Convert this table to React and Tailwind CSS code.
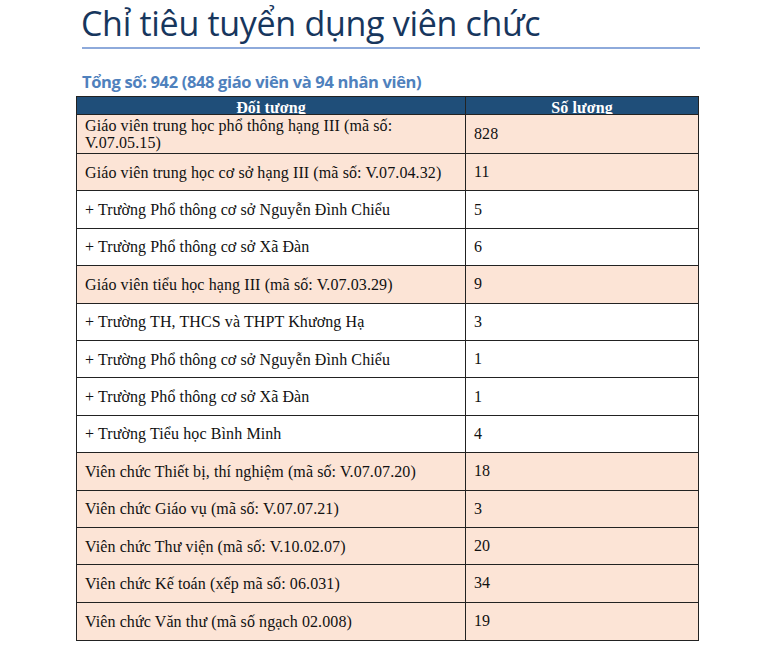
export default function App() {
  const rows = [
    ["Giáo viên trung học phổ thông hạng III (mã số: V.07.05.15)", "828", true, 39],
    ["Giáo viên trung học cơ sở hạng III (mã số: V.07.04.32)", "11", true],
    ["+ Trường Phổ thông cơ sở Nguyễn Đình Chiểu", "5", false],
    ["+ Trường Phổ thông cơ sở Xã Đàn", "6", false],
    ["Giáo viên tiểu học hạng III (mã số: V.07.03.29)", "9", true],
    ["+ Trường TH, THCS và THPT Khương Hạ", "3", false],
    ["+ Trường Phổ thông cơ sở Nguyễn Đình Chiểu", "1", false],
    ["+ Trường Phổ thông cơ sở Xã Đàn", "1", false],
    ["+ Trường Tiểu học Bình Minh", "4", false],
    ["Viên chức Thiết bị, thí nghiệm (mã số: V.07.07.20)", "18", true],
    ["Viên chức Giáo vụ (mã số: V.07.07.21)", "3", true],
    ["Viên chức Thư viện (mã số: V.10.02.07)", "20", true],
    ["Viên chức Kế toán (xếp mã số: 06.031)", "34", true],
    ["Viên chức Văn thư (mã số ngạch 02.008)", "19", true],
  ];
  return (
    <div className="w-[770px] h-[649px] bg-white overflow-hidden">
      <div className="pl-[81px] pt-[0px]">
        <h1 className="text-[#17365d] text-[34px] leading-[46px] tracking-[-0.3px]" style={{ fontFamily: '"Open Sans", sans-serif' }}>
          Chỉ tiêu tuyển dụng viên chức
        </h1>
      </div>
      <div className="ml-[82px] w-[618px] h-[2px] bg-[#8eaadb] mt-[1px]" />
      <div className="pl-[82px] mt-[21px] text-[#4f81bd] font-bold text-[16.5px] tracking-[-0.35px] leading-[24px]" style={{ fontFamily: '"Open Sans", sans-serif' }}>
        Tổng số: 942 (848 giáo viên và 94 nhân viên)
      </div>
      <div className="ml-[76px] w-[623px] mt-[2px] border border-[#222] text-[16px] tracking-[0.1px] text-[#111]" style={{ fontFamily: '"Liberation Serif", serif' }}>
        <div className="flex h-[18px] bg-[#1f4e79] text-white font-bold overflow-hidden border-b border-[#222]">
          <div className="w-[389px] border-r border-[#222] text-center leading-[21px]">Đối tượng</div>
          <div className="flex-1 text-center leading-[21px]">Số lượng</div>
        </div>
        {rows.map(([a, b, peach, h], i) => (
          <div
            key={i}
            className={`flex border-b border-[#222] last:border-b-0 ${peach ? "bg-[#fce4d6]" : "bg-white"}`}
            style={{ height: (h || 37.4) + "px" }}
          >
            <div className="w-[389px] border-r border-[#222] px-[8px] flex items-center leading-[17px]">{a}</div>
            <div className="flex-1 px-[8px] flex items-center">{b}</div>
          </div>
        ))}
      </div>
    </div>
  );
}
